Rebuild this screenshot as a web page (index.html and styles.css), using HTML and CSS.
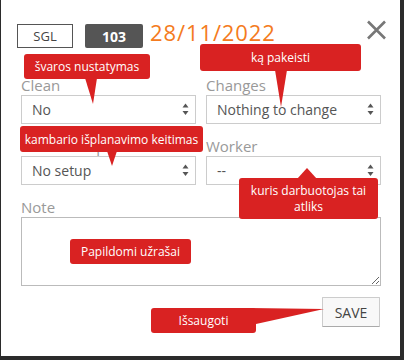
FILE: index.html
```html
<!DOCTYPE html>
<html lang="lt">
<head>
<meta charset="utf-8">
<title>Room</title>
<link rel="stylesheet" href="styles.css">
</head>
<body>
<div class="modal">
  <div class="header">
    <span class="tag tag-type">SGL</span>
    <span class="tag tag-room">103</span>
    <span class="date">28/11/2022</span>
    <svg class="close" width="21" height="20" viewBox="0 0 21 20"><path d="M2 1.5 L19 18.5 M19 1.5 L2 18.5" stroke="#777" stroke-width="2.6" fill="none"/></svg>
  </div>
  <div class="form">
    <div class="field">
      <div class="label">Clean</div>
      <div class="select"><span>No</span><svg class="arrows" width="7" height="13" viewBox="0 0 7 13"><path d="M3.5 0.5 L6.5 4.5 L0.5 4.5 Z M0.5 8 L6.5 8 L3.5 12 Z" fill="#555"/></svg></div>
    </div>
    <div class="field">
      <div class="label">Changes</div>
      <div class="select"><span>Nothing to change</span><svg class="arrows" width="7" height="13" viewBox="0 0 7 13"><path d="M3.5 0.5 L6.5 4.5 L0.5 4.5 Z M0.5 8 L6.5 8 L3.5 12 Z" fill="#555"/></svg></div>
    </div>
    <div class="field">
      <div class="label">Room setup</div>
      <div class="select"><span>No setup</span><svg class="arrows" width="7" height="13" viewBox="0 0 7 13"><path d="M3.5 0.5 L6.5 4.5 L0.5 4.5 Z M0.5 8 L6.5 8 L3.5 12 Z" fill="#555"/></svg></div>
    </div>
    <div class="field">
      <div class="label">Worker</div>
      <div class="select"><span>--</span><svg class="arrows" width="7" height="13" viewBox="0 0 7 13"><path d="M3.5 0.5 L6.5 4.5 L0.5 4.5 Z M0.5 8 L6.5 8 L3.5 12 Z" fill="#555"/></svg></div>
    </div>
    <div class="field wide">
      <div class="label">Note</div>
      <textarea class="note"></textarea>
    </div>
    <div class="actions wide">
      <button class="save">SAVE</button>
    </div>
  </div>

  <div class="tip tip-clean">švaros nustatymas</div>
  <div class="tip tip-changes">ką pakeisti</div>
  <div class="tip tip-setup">kambario išplanavimo keitimas</div>
  <div class="tip tip-worker">kuris darbuotojas tai atliks</div>
  <div class="tip tip-note">Papildomi užrašai</div>
  <div class="tip tip-save">Išsaugoti</div>
</div>
</body>
</html>
```

FILE: styles.css
```css
html, body {
  margin: 0;
  padding: 0;
}
body {
  background: #2b2b2b;
  width: 404px;
  height: 360px;
  overflow: hidden;
  font-family: "Open Sans", "Noto Sans", sans-serif;
}
.modal {
  position: relative;
  margin-left: 1px;
  width: 399px;
  height: 356px;
  background: #fff;
  box-sizing: border-box;
  padding-top: 24px;
}
.header {
  display: flex;
  align-items: flex-start;
  height: 24px;
  padding-left: 16px;
  padding-right: 13px;
}
.tag {
  box-sizing: border-box;
  height: 24px;
  display: flex;
  align-items: center;
  justify-content: center;
  font-size: 13px;
}
.tag-type {
  width: 56px;
  border: 1px solid #555;
  color: #444;
}
.tag-room {
  width: 58px;
  margin-left: 12px;
  background: #555;
  color: #fff;
  font-weight: 700;
  font-size: 14px;
  border-radius: 2px;
}
.date {
  margin-left: 7px;
  margin-top: -4px;
  font-size: 22px;
  line-height: 24px;
  letter-spacing: 0.9px;
  color: #f47b20;
}
.close {
  margin-left: auto;
  margin-top: -4px;
}
.form {
  margin-top: 27px;
  padding-left: 20px;
  display: grid;
  grid-template-columns: 175px 175px;
  column-gap: 10px;
  row-gap: 12px;
}
.wide {
  grid-column: 1 / 3;
}
.label {
  font-size: 15px;
  line-height: 20px;
  color: #999;
}
.select {
  box-sizing: border-box;
  height: 29px;
  border: 1px solid #ccc;
  display: flex;
  align-items: center;
  justify-content: space-between;
  padding: 0 6px 0 10px;
  font-size: 14px;
  color: #555;
}
.note {
  display: block;
  box-sizing: border-box;
  width: 360px;
  height: 69px;
  margin: 0;
  border: 1px solid #bbb;
  border-radius: 0;
  font-family: inherit;
}
.actions {
  display: flex;
  justify-content: flex-end;
  margin-top: -1px;
  padding-right: 1px;
}
.save {
  box-sizing: border-box;
  width: 58px;
  height: 30px;
  background: #f8f8f8;
  border: 1px solid #ccc;
  border-bottom-color: #aaa;
  border-radius: 1px;
  font-family: inherit;
  font-size: 14px;
  color: #444;
  padding: 0;
}
.tip {
  position: absolute;
  box-sizing: border-box;
  background: #d92222;
  color: #fff;
  font-size: 12px;
  border-radius: 3px;
  display: flex;
  align-items: center;
  justify-content: center;
  text-align: center;
}
.tip::after {
  content: "";
  position: absolute;
  background: #d92222;
}
.tip-clean {
  left: 23px; top: 54px; width: 126px; height: 25px;
}
.tip-clean::after {
  left: 61px; top: 24px; width: 12px; height: 26px;
  clip-path: polygon(0 0, 100% 0, 8px 100%);
}
.tip-changes {
  left: 199px; top: 44px; width: 161px; height: 27px;
}
.tip-changes::after {
  left: 75px; top: 26px; width: 12px; height: 37px;
  clip-path: polygon(0 0, 100% 0, 50% 100%);
}
.tip-setup {
  left: 19px; top: 126px; width: 183px; height: 26px;
}
.tip-setup::after {
  left: 87px; top: 25px; width: 10px; height: 15px;
  clip-path: polygon(0 0, 100% 0, 50% 100%);
}
.tip-worker {
  left: 238px; top: 178px; width: 139px; height: 41px;
  padding: 0 8px;
  line-height: 16px;
}
.tip-worker::after {
  left: 58px; top: -10px; width: 20px; height: 11px;
  clip-path: polygon(50% 0, 100% 100%, 0 100%);
}
.tip-note {
  left: 69px; top: 239px; width: 121px; height: 25px;
}
.tip-save {
  left: 150px; top: 308px; width: 105px; height: 25px;
}
.tip-save::after {
  left: 99px; top: 0; width: 74px; height: 17px;
  clip-path: polygon(0 0, 100% 1px, 6px 16px, 0 16px);
}
```
